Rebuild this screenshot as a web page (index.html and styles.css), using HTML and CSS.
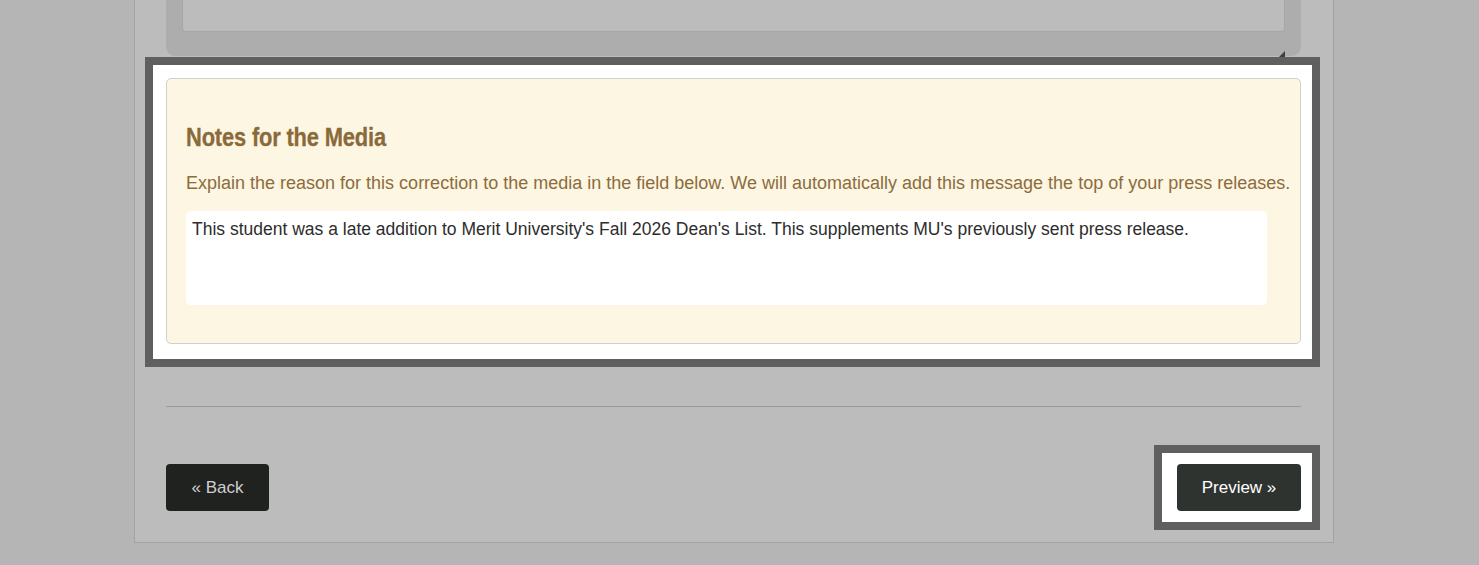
FILE: index.html
```html
<!DOCTYPE html>
<html lang="en">
<head>
<meta charset="utf-8">
<title>Notes for the Media</title>
<link rel="stylesheet" href="styles.css">
</head>
<body>
<div class="page">
  <div class="prev-field">
    <div class="prev-input"></div>
    <span class="resize-grip"></span>
  </div>

  <div class="spotlight">
    <section class="notes-card">
      <h2 class="notes-title"><span class="notes-title-text">Notes for the Media</span></h2>
      <p class="notes-help">Explain the reason for this correction to the media in the field below. We will automatically add this message the top of your press releases.</p>
      <div class="notes-input">This student was a late addition to Merit University's Fall 2026 Dean's List. This supplements MU's previously sent press release.</div>
    </section>
  </div>

  <hr class="divider">

  <div class="actions">
    <button class="btn btn-back" type="button">&laquo; Back</button>
    <div class="spotlight-btn">
      <button class="btn btn-preview" type="button">Preview &raquo;</button>
    </div>
  </div>
</div>
</body>
</html>
```

FILE: styles.css
```css
html, body {
  margin: 0;
  padding: 0;
}

body {
  background: #b5b5b5;
  font-family: "Liberation Sans", Arial, Helvetica, sans-serif;
  height: 565px;
  overflow: hidden;
}

.page {
  margin-left: 134px;
  width: 1135px;
  padding: 0 32px 12px 31px;
  background: #bcbcbc;
  border: 1px solid #a3a3a3;
  border-top: none;
}

.prev-field {
  position: relative;
  background: #adadad;
  padding: 0 16px 23px 16px;
  border-radius: 0 0 9px 9px;
  height: 33px;
}

.prev-input {
  height: 32px;
  box-sizing: border-box;
  background: #bcbcbc;
  border: 1px solid #a6a6a6;
  border-top: none;
  border-radius: 0 0 4px 4px;
}

.resize-grip {
  position: absolute;
  right: 16px;
  bottom: -2px;
  width: 0;
  height: 0;
  border-left: 7px solid transparent;
  border-bottom: 7px solid #3e3e3e;
}

.spotlight {
  position: relative;
  margin: 1px -19px 0 -21px;
  border: 8px solid #5f5f5f;
  background: #ffffff;
  padding: 13px 11px 15px 13px;
}

.notes-card {
  background: #fdf6e3;
  border: 1px solid #cfcfcf;
  border-radius: 5px;
  padding: 0 8px 38px 19px;
}

.notes-title {
  margin: 43px 0 0 0;
  font-weight: bold;
  font-size: 26px;
  line-height: 30px;
  color: #8a6a39;
  white-space: nowrap;
}

.notes-title-text {
  display: inline-block;
  transform: scaleX(0.842);
  transform-origin: left center;
  letter-spacing: -0.2px;
  -webkit-text-stroke: 0.3px #8a6a39;
}

.notes-help {
  margin: 20px 0 0 0;
  font-size: 18px;
  line-height: 22px;
  color: #8c6c3c;
  white-space: nowrap;
}

.notes-input {
  margin-top: 17px;
  width: 1081px;
  height: 94px;
  box-sizing: border-box;
  background: #ffffff;
  border-radius: 5px;
  padding: 8px 6px 6px 6px;
  font-size: 17.5px;
  line-height: 20px;
  color: #2d2d2d;
}

.divider {
  margin: 39px 0 0 0;
  border: none;
  border-top: 1px solid #9a9a9a;
  height: 0;
}

.actions {
  margin-top: 38px;
  display: flex;
  justify-content: space-between;
  align-items: center;
}

.spotlight-btn {
  margin-right: -19px;
  border: 8px solid #5f5f5f;
  background: #ffffff;
  padding: 11px 11px 11px 15px;
}

.btn {
  display: block;
  height: 47px;
  border: none;
  border-radius: 4px;
  font-family: "Liberation Sans", Arial, Helvetica, sans-serif;
  font-size: 17px;
  padding: 0;
  text-align: center;
  cursor: pointer;
}

.btn-back {
  width: 103px;
  background: #20221f;
  color: #cfcfcf;
}

.btn-preview {
  width: 124px;
  background: #2f332f;
  color: #ffffff;
}
```
